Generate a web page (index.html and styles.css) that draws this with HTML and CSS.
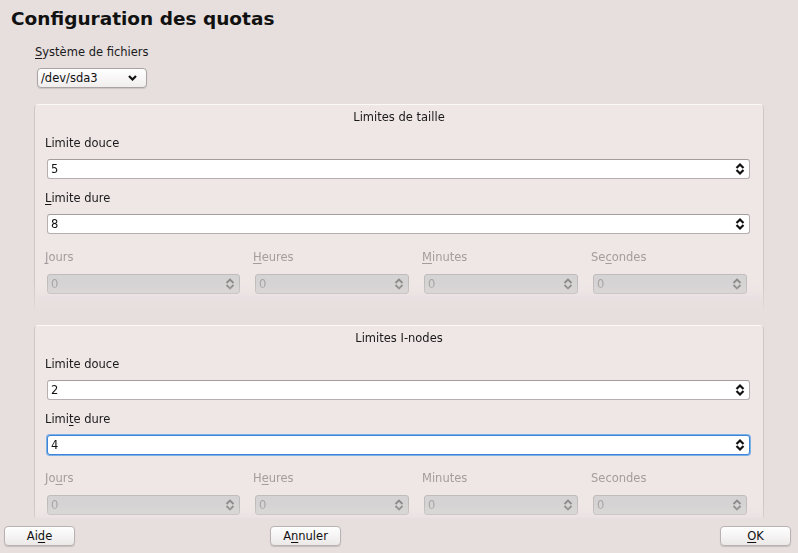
FILE: index.html
```html
<!DOCTYPE html>
<html lang="fr">
<head>
<meta charset="utf-8">
<link rel="stylesheet" href="styles.css">
</head>
<body>
<div class="dialog">
  <h1 class="title">Configuration des quotas</h1>
  <div class="fs">
    <div class="label"><u>S</u>ystème de fichiers</div>
    <div class="combo"><span>/dev/sda3</span>
      <svg class="chev" width="9" height="6" viewBox="0 0 9 6"><polyline points="1,1 4.5,4.5 8,1" fill="none" stroke="#111" stroke-width="2.2"/></svg>
    </div>
  </div>
  <div class="scroll">
    <section class="group">
      <div class="gtitle">Limites de taille</div>
      <div class="label">Limite douce</div>
      <div class="spin"><span>5</span><svg class="arr" width="10" height="14" viewBox="0 0 10 14"><polyline points="1.5,6 5,2.5 8.5,6" /><polyline points="1.5,8 5,11.5 8.5,8" /></svg></div>
      <div class="label"><u>L</u>imite dure</div>
      <div class="spin"><span>8</span><svg class="arr" width="10" height="14" viewBox="0 0 10 14"><polyline points="1.5,6 5,2.5 8.5,6" /><polyline points="1.5,8 5,11.5 8.5,8" /></svg></div>
      <div class="times">
        <div class="tcol"><div class="label dis"><u>J</u>ours</div><div class="spin off"><span>0</span><svg class="arr" width="10" height="14" viewBox="0 0 10 14"><polyline points="1.5,6 5,2.5 8.5,6" /><polyline points="1.5,8 5,11.5 8.5,8" /></svg></div></div>
        <div class="tcol"><div class="label dis"><u>H</u>eures</div><div class="spin off"><span>0</span><svg class="arr" width="10" height="14" viewBox="0 0 10 14"><polyline points="1.5,6 5,2.5 8.5,6" /><polyline points="1.5,8 5,11.5 8.5,8" /></svg></div></div>
        <div class="tcol"><div class="label dis"><u>M</u>inutes</div><div class="spin off"><span>0</span><svg class="arr" width="10" height="14" viewBox="0 0 10 14"><polyline points="1.5,6 5,2.5 8.5,6" /><polyline points="1.5,8 5,11.5 8.5,8" /></svg></div></div>
        <div class="tcol"><div class="label dis">Se<u>c</u>ondes</div><div class="spin off"><span>0</span><svg class="arr" width="10" height="14" viewBox="0 0 10 14"><polyline points="1.5,6 5,2.5 8.5,6" /><polyline points="1.5,8 5,11.5 8.5,8" /></svg></div></div>
      </div>
    </section>
    <section class="group">
      <div class="gtitle">Limites I-nodes</div>
      <div class="label">Limite douce</div>
      <div class="spin"><span>2</span><svg class="arr" width="10" height="14" viewBox="0 0 10 14"><polyline points="1.5,6 5,2.5 8.5,6" /><polyline points="1.5,8 5,11.5 8.5,8" /></svg></div>
      <div class="label">Limi<u>t</u>e dure</div>
      <div class="spin focus"><span>4</span><svg class="arr" width="10" height="14" viewBox="0 0 10 14"><polyline points="1.5,6 5,2.5 8.5,6" /><polyline points="1.5,8 5,11.5 8.5,8" /></svg></div>
      <div class="times">
        <div class="tcol"><div class="label dis">Jo<u>u</u>rs</div><div class="spin off"><span>0</span><svg class="arr" width="10" height="14" viewBox="0 0 10 14"><polyline points="1.5,6 5,2.5 8.5,6" /><polyline points="1.5,8 5,11.5 8.5,8" /></svg></div></div>
        <div class="tcol"><div class="label dis">H<u>e</u>ures</div><div class="spin off"><span>0</span><svg class="arr" width="10" height="14" viewBox="0 0 10 14"><polyline points="1.5,6 5,2.5 8.5,6" /><polyline points="1.5,8 5,11.5 8.5,8" /></svg></div></div>
        <div class="tcol"><div class="label dis">Minutes</div><div class="spin off"><span>0</span><svg class="arr" width="10" height="14" viewBox="0 0 10 14"><polyline points="1.5,6 5,2.5 8.5,6" /><polyline points="1.5,8 5,11.5 8.5,8" /></svg></div></div>
        <div class="tcol"><div class="label dis">Secondes</div><div class="spin off"><span>0</span><svg class="arr" width="10" height="14" viewBox="0 0 10 14"><polyline points="1.5,6 5,2.5 8.5,6" /><polyline points="1.5,8 5,11.5 8.5,8" /></svg></div></div>
      </div>
    </section>
  </div>
  <div class="buttons">
    <div class="btn">Ai<u>d</u>e</div>
    <div class="btn cancel">A<u>n</u>nuler</div>
    <div class="btn ok"><u>O</u>K</div>
  </div>
</div>
</body>
</html>
```

FILE: styles.css
```css
html, body {
  margin: 0;
  padding: 0;
}
body {
  background: #e6dfde;
  font-family: "DejaVu Sans", sans-serif;
  font-size: 11.5px;
  color: #1a1a1a;
  width: 798px;
  height: 553px;
  overflow: hidden;
}
.dialog {
  display: flex;
  flex-direction: column;
  height: 553px;
}
.title {
  margin: 0;
  padding: 8px 0 0 11px;
  font-size: 18.5px;
  font-weight: bold;
  line-height: 22px;
  color: #111;
}
.label {
  line-height: 14px;
  height: 14px;
  white-space: nowrap;
}
.label u {
  text-decoration-thickness: 1px;
  text-underline-offset: 2px;
}
.dis {
  color: #a49d9d;
}
.fs {
  padding: 15px 0 0 35px;
}
.combo {
  margin: 9px 0 0 2px;
  height: 18px;
  border: 1px solid #aaa3a3;
  border-radius: 4px;
  background: linear-gradient(#ffffff, #f1eded);
  box-shadow: 0 1px 1px rgba(0,0,0,0.12);
  display: flex;
  align-items: center;
  justify-content: space-between;
  padding: 0 9px 0 3px;
  box-sizing: content-box;
  width: 96px;
  color: #111;
}
.chev {
  display: block;
}
.scroll {
  margin: 16px 0 0 34px;
  width: 730px;
  height: 414px;
  overflow: hidden;
}
.group {
  height: 205px;
  box-sizing: border-box;
  border: 1px solid #cfc7c7;
  border-top-color: #fbf8f8;
  border-bottom: none;
  border-radius: 4px 4px 0 0;
  background: linear-gradient(#efe6e6 0, #efe6e6 188px, #e6dfde 205px);
  padding: 5px 13px 0 10px;
  margin-bottom: 16px;
  -webkit-mask-image: linear-gradient(#000 180px, rgba(0,0,0,0.2) 205px);
}
.gtitle {
  text-align: center;
  line-height: 14px;
  height: 14px;
  margin-bottom: 12px;
  padding-left: 3px;
}
.spin {
  margin: 9px 0 12px 2px;
  height: 20px;
  box-sizing: border-box;
  border: 1px solid #b6afaf;
  border-top-color: #a49d9d;
  border-radius: 3px;
  background: #fff;
  display: flex;
  align-items: center;
  justify-content: space-between;
  padding: 0 4px 0 3px;
  color: #111;
}
.spin .arr {
  display: block;
  fill: none;
  stroke: #111;
  stroke-width: 2.2;
}
.spin.focus {
  border: 1px solid #3d84d6;
  box-shadow: 0 0 0 1px #7eb0e8;
}
.spin.off {
  background: #d5d3d3;
  border-color: #c1bcbc;
  color: #aaa4a4;
  margin-bottom: 0;
}
.spin.off .arr {
  stroke: #8f8a8a;
  stroke-width: 1.8;
}
.times {
  display: grid;
  grid-template-columns: 195px 156px 156px 156px;
  column-gap: 13px;
  margin-top: 16px;
}
.times .spin {
  margin-top: 10px;
}
.buttons {
  display: flex;
  align-items: center;
  padding: 8px 7px 0 4px;
}
.btn {
  width: 71px;
  height: 20px;
  box-sizing: border-box;
  border: 1px solid #b9b2b2;
  border-radius: 4px;
  background: linear-gradient(#ffffff, #ece8e8);
  box-shadow: 0 1px 1px rgba(0,0,0,0.15);
  text-align: center;
  line-height: 18px;
  color: #111;
}
.btn u {
  text-underline-offset: 2px;
}
.cancel {
  margin-left: 195px;
}
.ok {
  margin-left: auto;
}
```
